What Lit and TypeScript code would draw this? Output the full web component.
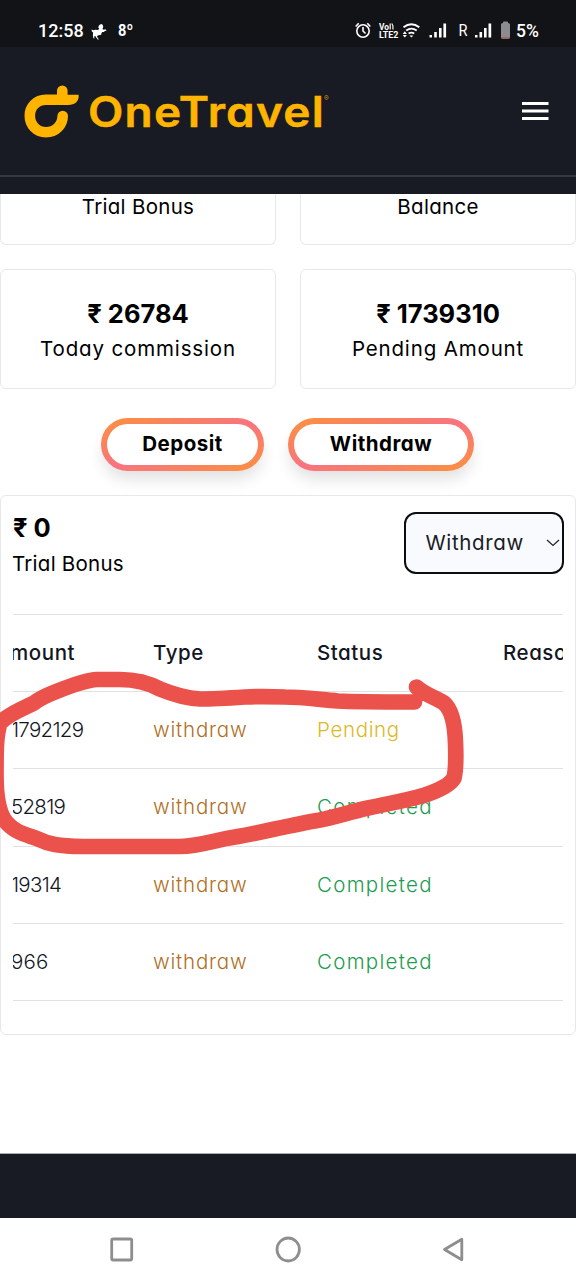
import { LitElement, html, css } from "lit";
import { customElement } from "lit/decorators.js";

interface Entry {
  amount: string;
  status: "Pending" | "Completed";
}

const entries: Entry[] = [
  { amount: "1792129", status: "Pending" },
  { amount: "52819", status: "Completed" },
  { amount: "19314", status: "Completed" },
  { amount: "966", status: "Completed" },
];

@customElement("status-bar")
class StatusBar extends LitElement {
  static styles = css`
    :host {
      display: flex;
      box-sizing: border-box;
      height: 47px;
      padding: 14px 37px 0 38px;
      background: #121317;
      color: #fff;
      font: 500 18px/33px Roboto, sans-serif;
    }
    .time { letter-spacing: 0; width: 52px; }
    .horse { width: 18px; height: 18px; margin-top: 8px; }
    .temp { margin-left: 10px; font-size: 17px; font-weight: 700; transform: scaleX(0.86); transform-origin: left; }
    .icons { margin-left: auto; width: 160px; height: 33px; }
    .pct { margin-left: 1px; width: 23px; font-size: 17.5px; line-height: 34px; }
    .volte { font: 700 8.5px Roboto, sans-serif; }
    .roam { font: 400 16px Roboto, sans-serif; }
  `;
  render() {
    return html`
      <span class="time">12:58</span>
      <svg class="horse" viewBox="90 22 18 18" fill="#fff">
        <path d="M91.500 29.500l2.200.8 1.500-.6 3 .2 1-1.500-1-.9c.4-2 1.500-3.200 3.200-3.500 1.400.6 1.900 1.900 1.800 3.200l-.8 1.700 1.400.9 1.500-.5 1.400 1.300-1.800.5-1 .8-1.500.1-1 1.300-.2 1.500-2.600.4-1.700.9.9 2 1.200 1.300-1.200.1-1.800-2.200-.6-1.300-1.200.5.200 1.900-1-.2-.5-2.800.2-3-1.200-.8z"/>
      </svg>
      <span class="temp">8º</span>
      <svg class="icons" viewBox="355 14 160 33" fill="none" stroke="#fff">
        <circle cx="363" cy="31" r="6.200" stroke-width="1.600"/>
        <path d="M363 27v4l2.500 2.500M355.700 26.500l3-3.200M370.300 26.500l-3-3.200" stroke-width="1.600"/>
        <g fill="#fff" stroke="none">
          <text class="volte" x="379" y="29.500" textLength="10" lengthAdjust="spacingAndGlyphs">Vo</text>
          <text class="volte" x="379" y="37.500" textLength="19.500" lengthAdjust="spacingAndGlyphs">LTE2</text>
        </g>
        <path d="M390.200 23.500v6M391.800 23.500q2 2.500 1.100 6" stroke-width="1.200"/>
        <path d="M403.500 27.300q7.900-6 15.800 0M406.200 30.500q5.200-3.800 10.500 0M408.600 33.500q2.800-1.800 5.600 0" stroke-width="1.900"/>
        <g fill="#fff" stroke="none">
          <path d="M409.500 35.500h3.800l-1.900 2zM402.700 34l2.100-2.800 2.100 2.800zM402.700 35h4.200l-2.100 2.500z"/>
          <path d="M429.500 35h2.500v2.600h-2.500zM434.200 32h2.600v5.600h-2.600zM439 28h2.600v9.600H439zM443.400 23.500h2.700v14.100h-2.700z"/>
          <path d="M475 35h2.500v2.600H475zM479.500 32h2.600v5.600h-2.600zM484 28h2.600v9.600H484zM488.500 23.500h2.700v14.100h-2.700z"/>
          <text class="roam" x="458.500" y="36" textLength="9" lengthAdjust="spacingAndGlyphs">R</text>
          <path fill="#8c8c8e" d="M501 24.500q0-1.500 1.800-1.500l.7-1.500h4l.7 1.500q1.800 0 1.800 1.500v12.500q0 1.700-1.600 1.700h-5.800q-1.600 0-1.600-1.700z"/>
          <path fill="#a56562" d="M501 37h9q0 1.700-1.600 1.700h-5.800q-1.600 0-1.600-1.700z"/>
        </g>
      </svg>
      <span class="pct">5%</span>
    `;
  }
}

@customElement("site-header")
class SiteHeader extends LitElement {
  static styles = css`
    :host { display: block; background: #181a24; height: 146.5px; }
    .bar {
      display: flex;
      align-items: center;
      box-sizing: border-box;
      height: 130px;
      padding: 0 27px 0 23px;
      border-bottom: 2px solid #363842;
    }
    .mark { width: 58px; height: 54px; }
    .name {
      width: 236px;
      margin: 2px 0 0 7px;
      font: 600 42px/50px Inter, sans-serif;
      font-feature-settings: "cv11";
      color: #ffb400;
      -webkit-text-stroke: 0.5px #ffb400;
      letter-spacing: 1.100px;
      transform: scaleX(1.095);
      transform-origin: left;
    }
    .reg { font: 700 7px Inter, sans-serif; color: #c58c0c; margin-top: -26px; }
    .menu { margin-left: auto; width: 28px; height: 20px; }
  `;
  render() {
    return html`
      <div class="bar">
        <svg class="mark" viewBox="23 84.500 58 54" fill="none" stroke="#ffb400" stroke-linecap="round" stroke-linejoin="round">
          <path d="M62.700 116.500c0 9-7.200 16.200-16.700 16.200-9.500 0-16.200-7.500-16.200-16.500s6.700-15.900 16-15.900h17" stroke-width="10.600"/>
          <path d="M57 95.300V91.200a5.300 5.300 0 0 1 10.600 0v4h11c.8 6.200-3.500 10.300-10.500 10.300H57z" fill="#ffb400" stroke="none"/>
        </svg>
        <span class="name">OneTravel</span><span class="reg">®</span>
        <svg class="menu" viewBox="0 0 28 20"><path d="M1 2.500h26.500M1 10h26.500M1 17.500h26.500" stroke="#fff" stroke-width="2.800"/></svg>
      </div>
    `;
  }
}

@customElement("history-card")
class HistoryCard extends LitElement {
  static styles = css`
    :host {
      display: block;
      box-sizing: border-box;
      height: 540px;
      padding: 17px 12px 0;
      border: 1.500px solid #e8e8ea;
      border-radius: 6px;
      color: #000;
    }
    .top { display: flex; justify-content: space-between; height: 101px; }
    .value { font-size: 25.500px; line-height: 32px; font-weight: 700; margin-top: -1px; }
    .label { font-size: 20.500px; line-height: 36px; letter-spacing: 0.25px; margin: 2px 0 0 -1px; }
    .select {
      display: flex;
      align-items: center;
      justify-content: space-between;
      box-sizing: border-box;
      width: 160px;
      height: 62px;
      margin: -0.5px -0.5px 0 0;
      padding: 0 2px 1px 20px;
      border: 2.500px solid #0c0d10;
      border-radius: 12px;
      background: #f8fafd;
      color: #1a1d26;
      font-size: 20.500px;
      letter-spacing: 0.65px;
    }
    .chev { width: 14px; height: 9px; }
    .scroll { overflow: hidden; border-top: 1px solid #e0e1e3; margin: 0; }
    .row {
      display: grid;
      grid-template-columns: 142px 164px 186px 100px;
      height: 76.400px;
      line-height: 76px;
      margin-left: -2px;
      border-bottom: 1px solid #e0e1e3;
      font-size: 20.500px;
      font-weight: 300;
      color: #14161f;
    }
    .head { font-weight: 500; letter-spacing: 0.550px; }
    .first { margin-left: -16px; }
    .num { letter-spacing: -0.7px; }
    .short { letter-spacing: 0.2px; }
    .type { color: #b0701f; letter-spacing: 0.8px; }
    .pending { color: #dcb91f; letter-spacing: 0.65px; }
    .completed { color: #209c50; letter-spacing: 1.300px; }
  `;
  render() {
    return html`
      <div class="top">
        <div>
          <div class="value">₹ 0</div>
          <div class="label">Trial Bonus</div>
        </div>
        <div class="select">Withdraw
          <svg class="chev" viewBox="0 0 14 9"><path d="M1 2l6 5.500L13 2" fill="none" stroke="#222" stroke-width="1.200"/></svg>
        </div>
      </div>
      <div class="scroll">
        <div class="row head">
          <span class="first">Amount</span><span>Type</span><span>Status</span><span>Reason</span>
        </div>
        ${entries.map(
          (e) => html`<div class="row">
            <span class=${e.amount.length < 4 ? "short" : "num"}>${e.amount}</span><span class="type">withdraw</span>
            <span class=${e.status.toLowerCase()}>${e.status}</span><span></span>
          </div>`
        )}
      </div>
    `;
  }
}

@customElement("app-root")
class AppRoot extends LitElement {
  static styles = css`
    :host {
      display: block;
      position: relative;
      width: 576px;
      height: 1280px;
      overflow: hidden;
      background: #fff;
      color: #000;
      font-family: Inter, sans-serif;
      font-feature-settings: "cv11";
    }
    .content { height: 959.5px; overflow: hidden; }
    .tiles { display: grid; grid-template-columns: 276px 276px; column-gap: 24px; row-gap: 24px; }
    .tile {
      box-sizing: border-box;
      height: 119.5px;
      padding-top: 27px;
      border: 1.500px solid #e8e8ea;
      border-radius: 6px;
      text-align: center;
    }
    .tile.cut { height: 51.500px; padding-top: 0; border-top: 0; border-radius: 0 0 6px 6px; }
    .value { font-size: 25.500px; line-height: 34px; font-weight: 700; }
    .label { font-size: 20.500px; line-height: 36px; letter-spacing: 0.850px; }
    .cut .label { line-height: 26px; letter-spacing: 0.300px; }
    .actions { display: flex; justify-content: center; gap: 24px; height: 53px; margin: 29.5px 1px 23.500px 0; }
    .btn {
      display: flex;
      align-items: center;
      justify-content: center;
      box-sizing: border-box;
      width: 163px;
      padding-bottom: 2px;
      border: 6px solid transparent;
      border-radius: 27px;
      background: linear-gradient(#fff, #fff) padding-box,
        linear-gradient(to bottom right, #fb923c, #f87380, #fb923c) border-box;
      box-shadow: 0 10px 16px -2px rgba(0, 0, 0, 0.12);
      font-size: 20.500px;
      font-weight: 700;
      letter-spacing: 0.5px;
    }
    .wide { width: 186px; }
    .footer { height: 65px; box-sizing: border-box; background: #181a24; border-top: 1px solid #a9acb0; }
    .nav { display: block; width: 576px; height: 62px; background: #fff; }
    .ink { position: absolute; left: 0; top: 660px; width: 576px; height: 210px; }
  `;
  render() {
    return html`
      <status-bar></status-bar>
      <site-header></site-header>
      <div class="content">
        <div class="tiles">
          <div class="tile cut"><div class="label">Trial Bonus</div></div>
          <div class="tile cut"><div class="label">Balance</div></div>
          <div class="tile"><div class="value">₹ 26784</div><div class="label">Today commission</div></div>
          <div class="tile"><div class="value">₹ 1739310</div><div class="label">Pending Amount</div></div>
        </div>
        <div class="actions">
          <div class="btn">Deposit</div>
          <div class="btn wide">Withdraw</div>
        </div>
        <history-card></history-card>
      </div>
      <div class="footer"></div>
      <svg class="nav" viewBox="0 1218 576 62" fill="none" stroke="#8e8e8e" stroke-width="2.800" stroke-linejoin="round">
        <rect x="111.700" y="1239" width="20" height="21" rx="1.500"/>
        <ellipse cx="288.200" cy="1249.500" rx="11.200" ry="11.500"/>
        <path d="M444.500 1249.500l17.300-10.300v20.600z"/>
      </svg>
      <svg class="ink" viewBox="0 660 576 210" fill="none" stroke="#eb524b" stroke-width="15.700" stroke-linecap="round" stroke-linejoin="round">
        <path d="M414.500 702C380 702 355 702 338 701C315 699 300 697 285 697C270 696.500 255 696.500 245 697C230 698 215 699 200 699C185 698 172 694 160 689C147 682 133 679.500 120 679.500L97 679.500C85 680 65 688 55 692C45 696 40 698 34 703C24 708 8 714 0 723C-4 735 -4 750 -4 775C-4 795 -2 812 6 822C15 833 28 835 38 839C48 844 58 846 83 846.500H180C200 846 215 840 235 837C255 834 290 825 320 820C335 817 350 812 368 808C390 803 405 801 425 795C440 790 450 785 454 778C456 770 456 755 455.500 743C455 725 452 710 444 703C435 697 425 695 416.500 687"/>
      </svg>
    `;
  }
}
